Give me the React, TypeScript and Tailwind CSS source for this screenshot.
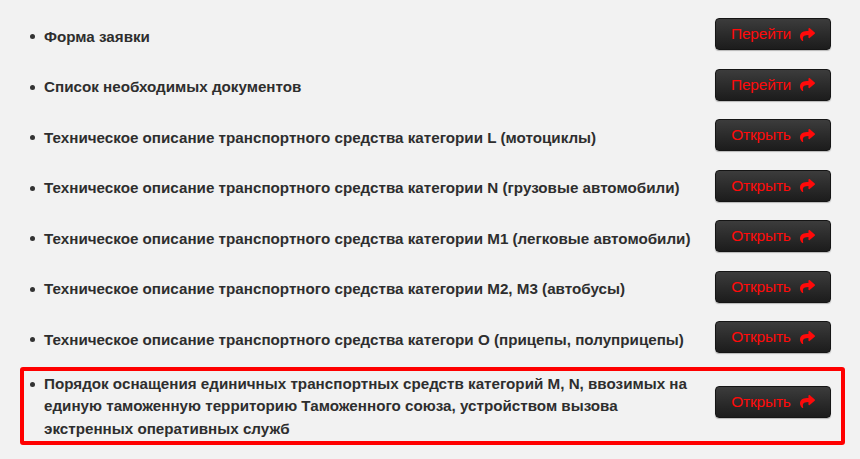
import { FaShare } from 'react-icons/fa'

const items = [
  { title: 'Форма заявки', action: 'Перейти' },
  { title: 'Список необходимых документов', action: 'Перейти' },
  { title: 'Техническое описание транспортного средства категории L (мотоциклы)', action: 'Открыть' },
  { title: 'Техническое описание транспортного средства категории N (грузовые автомобили)', action: 'Открыть' },
  { title: 'Техническое описание транспортного средства категории M1 (легковые автомобили)', action: 'Открыть' },
  { title: 'Техническое описание транспортного средства категории M2, M3 (автобусы)', action: 'Открыть' },
  { title: 'Техническое описание транспортного средства категори O (прицепы, полуприцепы)', action: 'Открыть' },
]

function ActionButton({ label, shift }: { label: string; shift: string }) {
  return (
    <button
      className={`flex h-[32px] w-[116px] shrink-0 items-center justify-center gap-[9px] rounded-[4px] border border-[#151515] bg-gradient-to-b from-[#3c3c3c] to-[#1c1c1c] text-[15.5px] text-[#ff0a0a] shadow-[0_1px_1px_rgba(0,0,0,0.25)] ${shift}`}
    >
      <span className="tracking-[-0.2px]">{label}</span>
      <FaShare className="h-[15px] w-[15px]" />
    </button>
  )
}

function Row({ title, action }: { title: string; action: string }) {
  return (
    <div className="flex h-[50.5px] items-center justify-between border-4 border-transparent pl-[6px] pr-[10px]">
      <div className="flex items-center">
        <span className="mr-[9px] h-[5px] w-[5px] rounded-full bg-[#333]" />
        <span className="text-[15.2px] font-bold text-[#2e2e2e]">{title}</span>
      </div>
      <ActionButton label={action} shift="mb-[6px]" />
    </div>
  )
}

export default function App() {
  return (
    <div
      className="h-[459px] w-[860px] overflow-hidden bg-[#f2f2f2] pt-[11.75px]"
      style={{ fontFamily: '"Liberation Sans", Arial, sans-serif' }}
    >
      <div className="ml-[20px] w-[825px]">
        {items.map((item) => (
          <Row key={item.title} title={item.title} action={item.action} />
        ))}
        <div className="mt-[2px] flex h-[78px] items-center justify-between rounded-[3px] border-4 border-[#ff0000] pl-[6px] pr-[10px]">
          <div className="flex w-[660px] items-start">
            <span className="mr-[9px] mt-[9px] h-[5px] w-[5px] shrink-0 rounded-full bg-[#333]" />
            <span className="text-[15.2px] font-bold leading-[22.5px] text-[#2e2e2e]">
              Порядок оснащения единичных транспортных средств категорий M, N, ввозимых на единую таможенную территорию Таможенного союза, устройством вызова экстренных оперативных служб
            </span>
          </div>
          <ActionButton label="Открыть" shift="mb-[9px]" />
        </div>
      </div>
    </div>
  )
}
